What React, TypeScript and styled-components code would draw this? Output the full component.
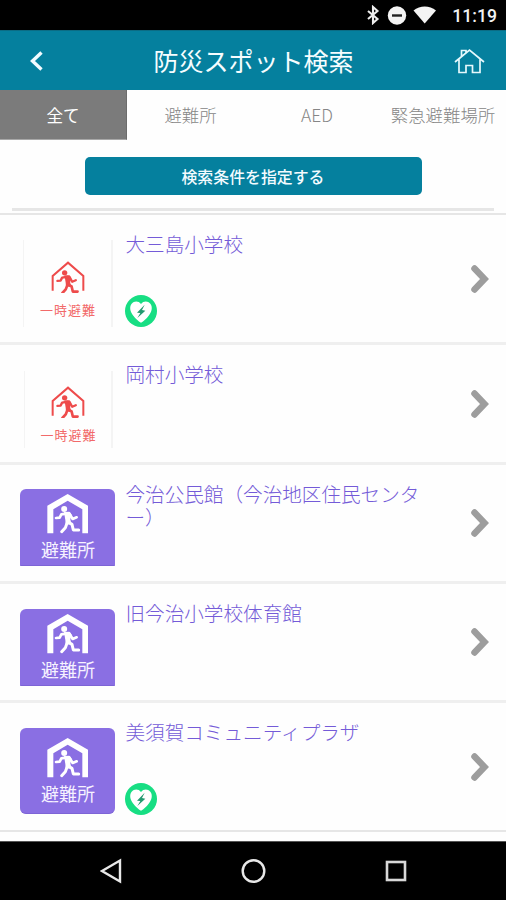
import React from "react";
import styled, { createGlobalStyle, css } from "styled-components";

const TEAL = "#05809e";
const PURPLE = "#8a6fe3";
const RED = "#ee4b4b";

const GlobalStyle = createGlobalStyle`
  * { box-sizing: border-box; }
  body {
    margin: 0;
    background: #fff;
    font-family: "Noto Sans CJK JP", "Noto Sans", sans-serif;
  }
`;

const Screen = styled.div`
  width: 506px;
  height: 900px;
  display: flex;
  flex-direction: column;
  overflow: hidden;
  background: #fefefe;
`;

const StatusBar = styled.div`
  flex: none;
  height: 30px;
  padding: 0 9px 0 366px;
  display: flex;
  align-items: center;
  background: #000;
  color: #f2f2f2;
`;

const Clock = styled.span`
  margin-left: auto;
  font: 500 17.6px/30px Roboto, sans-serif;
  padding-top: 2px;
`;

const Header = styled.header`
  flex: none;
  height: 60px;
  padding: 0 21px 0 25px;
  display: grid;
  grid-template-columns: 32px 1fr 32px;
  align-items: center;
  background: ${TEAL};
  border-top: 1px solid #0b6c84;
`;

const HeaderTitle = styled.h1`
  margin: 0;
  padding: 0 3px 1px 0;
  text-align: center;
  font-size: 25px;
  line-height: 58px;
  font-weight: 400;
  color: #f6fdff;
  white-space: nowrap;
`;

const HeaderButton = styled.button<{ $end?: boolean }>`
  border: 0;
  padding: 0;
  background: none;
  display: flex;
  justify-content: ${(p) => (p.$end ? "flex-end" : "flex-start")};
`;

const Tabs = styled.nav`
  flex: none;
  height: 50px;
  display: grid;
  grid-template-columns: 127px 127px 126px 126px;
`;

const Tab = styled.div<{ $active?: boolean }>`
  display: flex;
  align-items: center;
  justify-content: center;
  height: 50px;
  font-size: 17.4px;
  line-height: 48px;
  font-weight: 300;
  color: #868686;
  white-space: nowrap;
  padding-bottom: 1px;
  ${(p) =>
    p.$active &&
    css`
      background: #7b7b7b;
      color: #fff;
      font-weight: 400;
      border-right: 1px solid #6c6c6c;
      border-bottom: 1px solid #a8a8a8;
      padding-bottom: 0;
      font-size: 16.6px;
    `}
`;

const SearchArea = styled.div`
  flex: none;
  height: 73px;
  padding-top: 17px;
  display: flex;
  flex-direction: column;
  align-items: center;
`;

const SearchButton = styled.button`
  width: 337px;
  height: 38px;
  border: 0;
  border-radius: 5px;
  padding: 1px 0 0;
  background: ${TEAL};
  color: #f2fbff;
  font-family: inherit;
  font-size: 15.9px;
  line-height: 37px;
  font-weight: 500;
`;

const Rule = styled.div`
  width: 482px;
  height: 3px;
  margin-top: 13px;
  background: #e6e6e6;
`;

const List = styled.ul`
  margin: 0;
  padding: 0;
  list-style: none;
  flex: 1;
  border-top: 2px solid #e6e6e6;
`;

const Row = styled.li<{ $height: number; $last?: boolean }>`
  height: ${(p) => p.$height}px;
  padding: 0 17px 0 20px;
  display: grid;
  grid-template-columns: 95px 1fr 20px;
  column-gap: 10px;
  border-bottom: ${(p) => (p.$last ? "2px solid #e6e6e6" : "3px solid #efefef")};
`;

const IconCell = styled.div<{ $top: number }>`
  padding-top: ${(p) => p.$top}px;
`;

const ShelterTile = styled.div<{ $tall?: boolean }>`
  height: ${(p) => (p.$tall ? 86 : 77)}px;
  padding-top: ${(p) => (p.$tall ? 10 : 5)}px;
  border-radius: ${(p) => (p.$tall ? "6px" : "6px 6px 1px 1px")};
  display: flex;
  flex-direction: column;
  align-items: center;
  background: ${PURPLE};
  border-bottom: 1px solid #7d64d6;
`;

const TileLabel = styled.span<{ $tall?: boolean }>`
  margin-top: 3px;
  padding-left: 1px;
  font-size: 18px;
  line-height: 24px;
  color: #f6f2ff;
`;

const TemporaryTile = styled.div<{ $tall?: boolean }>`
  width: ${(p) => (p.$tall ? 90 : 89)}px;
  margin-left: ${(p) => (p.$tall ? 3 : 4)}px;
  height: ${(p) => (p.$tall ? 87 : 77)}px;
  padding: ${(p) => (p.$tall ? 21 : 15)}px 0 0 0;
  display: flex;
  flex-direction: column;
  align-items: center;
  border-left: 1px solid #f4f4f4;
  border-right: 2px solid #f4f4f4;
`;

const TemporaryLabel = styled.span`
  margin-top: 7px;
  font-size: 13px;
  letter-spacing: 1px;
  line-height: 20px;
  padding-left: 1px;
  color: #f26a6a;
`;

const Details = styled.div`
  display: flex;
  flex-direction: column;
  justify-content: space-between;
  align-items: flex-start;
  padding: 17px 20px 15px 0;
`;

const Name = styled.div`
  width: 300px;
  padding-left: 0.5px;
  font-size: 19.6px;
  line-height: 23px;
  font-weight: 300;
  color: #745bd8;
`;

const ArrowCell = styled.div`
  display: flex;
  align-items: center;
  justify-content: flex-end;
`;

const NavBar = styled.footer`
  flex: none;
  height: 59px;
  padding-bottom: 1px;
  display: grid;
  grid-template-columns: 182px 142px 182px;
  place-items: center;
  background: #000;
  border-top: 1px solid #555;
`;

const NavKey = styled.div<{ $shift?: number }>`
  display: flex;
  padding-left: ${(p) => Math.max(0, p.$shift ?? 0)}px;
  padding-right: ${(p) => Math.max(0, -(p.$shift ?? 0))}px;
`;

function Runner({ color }: { color: string }) {
  return (
    <g stroke={color} fill="none" strokeLinejoin="round" strokeLinecap="round">
      <circle cx="50.500" cy="45" r="9" fill={color} stroke="none" />
      <path d="M50 54L66 53L73 62L69 76L72 90L55 93L54 78Z" fill={color} stroke="none" />
      <path d="M60 58L42 61L37 71L26 72" strokeWidth="8" />
      <path d="M66 58L76 75L88 70" strokeWidth="8" />
      <path d="M65 86L74 91L78 108L94 108" strokeWidth="9" />
      <path d="M59 88L54 101L43 113" strokeWidth="9" />
    </g>
  );
}

function ShelterIcon() {
  return (
    <svg width="41" height="39.5" viewBox="-1 0 123 118.5">
      <path d="M0 118V35L61 0L122 35V118H105V46L61 20L18 46V118Z" fill="#fff" />
      <Runner color="#fff" />
    </svg>
  );
}

function TemporaryIcon() {
  return (
    <svg width="34" height="32" viewBox="0 0 102 96">
      <path d="M5 89V45L51 5L97 45V89" fill="none" stroke={RED} strokeWidth="6" />
      <g transform="translate(-4 -4.5) scale(.89)">
        <Runner color={RED} />
      </g>
    </svg>
  );
}

function AedBadge() {
  return (
    <svg width="32" height="32" viewBox="0 0 96 96">
      <circle cx="48" cy="48" r="48" fill="#17de83" />
      <path
        d="M48 27C41 18 28 17 20 26C12 36 16 51 25 62C32 71 40 78 48 83C56 78 64 71 71 62C80 51 84 36 76 26C68 17 55 18 48 27Z"
        fill="#fff"
      />
      <path d="M59 29L36 53L46 54L37 69L61 47L51 45Z" fill="#249a70" />
    </svg>
  );
}

function Arrow() {
  return (
    <svg width="19" height="30" viewBox="0 0 19 30">
      <path d="M4.500 4.500L14.500 15L4.500 25.500" fill="none" stroke="#9d9d9d" strokeWidth="6.500" strokeLinecap="round" />
    </svg>
  );
}

function StatusIcons() {
  return (
    <svg width="72" height="20" viewBox="0 0 72 20">
      <path d="M2 6L11.500 14L7 18V2L11.500 6L2 14" fill="none" stroke="#eee" strokeWidth="2.100" />
      <circle cx="31" cy="10.500" r="9.200" fill="#f4f4f4" />
      <rect x="26" y="9.300" width="10" height="2.400" fill="#222" />
      <path d="M47.500 5.500C54 .2 63.500 .2 70 5.500L58.700 18.500Z" fill="#f4f4f4" />
    </svg>
  );
}

type Spot = { name: string; kind: "temporary" | "shelter"; tall?: boolean; aed?: boolean; height: number; top: number };

const spots: Spot[] = [
  { name: "大三島小学校", kind: "temporary", tall: true, aed: true, height: 130, top: 25 },
  { name: "岡村小学校", kind: "temporary", height: 120, top: 26 },
  { name: "今治公民館（今治地区住民センター）", kind: "shelter", height: 119, top: 24 },
  { name: "旧今治小学校体育館", kind: "shelter", height: 119, top: 25 },
  { name: "美須賀コミュニティプラザ", kind: "shelter", tall: true, aed: true, height: 129, top: 25 },
];

export default function App() {
  return (
    <>
      <GlobalStyle />
      <Screen>
        <StatusBar>
          <StatusIcons />
          <Clock>11:19</Clock>
        </StatusBar>
        <Header>
          <HeaderButton aria-label="戻る">
            <svg width="22" height="22" viewBox="0 0 22 22">
              <path d="M16.500 2.500L7.500 11L16.500 19.500" fill="none" stroke="#f2fbff" strokeWidth="3.400" />
            </svg>
          </HeaderButton>
          <HeaderTitle>防災スポット検索</HeaderTitle>
          <HeaderButton $end aria-label="ホーム">
            <svg width="31" height="26" viewBox="0 0 31 26" fill="none" stroke="#e6f8fc" strokeWidth="1.7">
              <path d="M1 14L15.500 2L30 14M5 11.500V24.500H12V17.500H18.500V24.500H26V11.500M7.500 8.500V2.500H12V4.500" />
            </svg>
          </HeaderButton>
        </Header>
        <Tabs>
          <Tab $active>全て</Tab>
          <Tab>避難所</Tab>
          <Tab>AED</Tab>
          <Tab>緊急避難場所</Tab>
        </Tabs>
        <SearchArea>
          <SearchButton>検索条件を指定する</SearchButton>
          <Rule />
        </SearchArea>
        <List>
          {spots.map((s, i) => (
            <Row key={s.name} $height={s.height} $last={i === spots.length - 1}>
              <IconCell $top={s.top}>
                {s.kind === "shelter" ? (
                  <ShelterTile $tall={s.tall}>
                    <ShelterIcon />
                    <TileLabel $tall={s.tall}>避難所</TileLabel>
                  </ShelterTile>
                ) : (
                  <TemporaryTile $tall={s.tall}>
                    <TemporaryIcon />
                    <TemporaryLabel>一時避難</TemporaryLabel>
                  </TemporaryTile>
                )}
              </IconCell>
              <Details>
                <Name>{s.name}</Name>
                {s.aed && <AedBadge />}
              </Details>
              <ArrowCell>
                <Arrow />
              </ArrowCell>
            </Row>
          ))}
        </List>
        <NavBar>
          <NavKey $shift={40}>
            <svg width="22" height="26" viewBox="0 0 22 26">
              <path d="M2 13L20 2.500V23.500Z" fill="none" stroke="#e8e8e8" strokeWidth="2.400" />
            </svg>
          </NavKey>
          <NavKey>
            <svg width="26" height="26" viewBox="0 0 26 26">
              <circle cx="13.500" cy="13" r="10.800" fill="none" stroke="#e8e8e8" strokeWidth="2.400" />
            </svg>
          </NavKey>
          <NavKey $shift={-38}>
            <svg width="22" height="22" viewBox="0 0 22 22">
              <rect x="2" y="2" width="18" height="18" fill="none" stroke="#d8d8d8" strokeWidth="2.600" />
            </svg>
          </NavKey>
        </NavBar>
      </Screen>
    </>
  );
}
